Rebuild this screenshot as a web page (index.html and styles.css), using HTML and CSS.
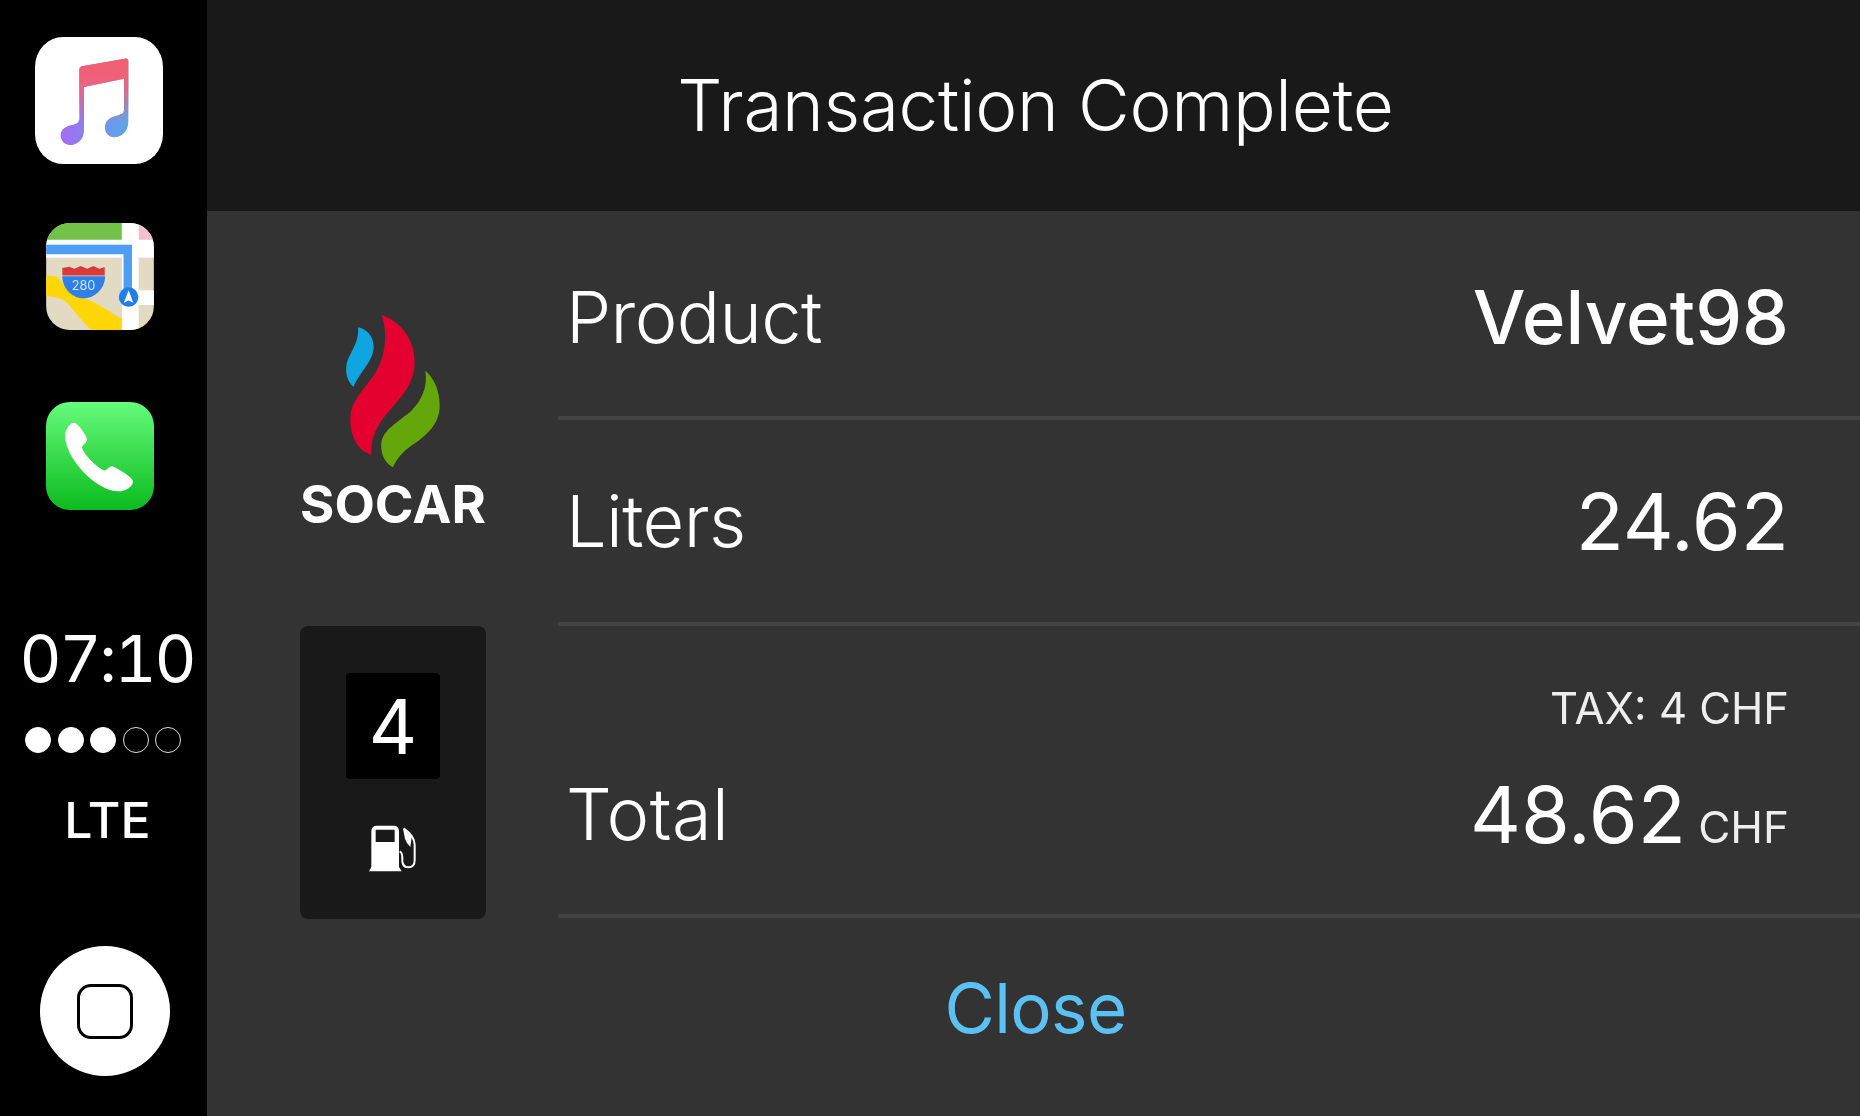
FILE: index.html
```html
<!DOCTYPE html>
<html lang="en">
<head>
<meta charset="utf-8">
<title>Transaction Complete</title>
<link rel="stylesheet" href="styles.css">
</head>
<body>
<div class="screen">
  <aside class="sidebar">
    <svg class="app app-music" viewBox="105 108 384 355" preserveAspectRatio="none">
      <defs>
        <linearGradient id="noteBase" x1="0" x2="1" y1="0" y2="0"><stop offset="0" stop-color="#a46cf2"/><stop offset="1" stop-color="#58a9e8"/></linearGradient>
        <linearGradient id="noteTop" x1="0" x2="0" y1="0" y2="1"><stop offset="0" stop-color="#f25f6e"/><stop offset=".3" stop-color="#ee6280"/><stop offset=".75" stop-color="#ee6280" stop-opacity="0"/></linearGradient>
        <path id="note" d="M238 200Q238 192 246 190L378 168Q385 167 385 175L385 345C385 375 360 390 340 388C322 386 314 372 315 358C316 340 332 332 350 328C362 325 372 322 372 310L372 225L252 248L252 370C252 398 225 412 207 410C190 408 182 395 182 382C183 365 197 358 215 354C228 351 238 348 238 335Z"/>
      </defs>
      <rect x="105" y="108" width="384" height="355" rx="84" fill="#fff"/>
      <use href="#note" fill="url(#noteBase)"/>
      <use href="#note" fill="url(#noteTop)"/>
    </svg>
    <svg class="app app-maps" viewBox="20 22 320 318">
      <rect x="20" y="22" width="320" height="318" fill="#e3dac4"/>
      <rect x="20" y="22" width="225" height="50" fill="#72c24a"/>
      <rect x="295" y="22" width="45" height="50" fill="#f0bfd0"/>
      <rect x="20" y="72" width="320" height="53" fill="#fff"/>
      <path d="M20 178L50 180C62 186 66 200 75 210C95 232 125 243 150 252C185 266 215 292 245 306V340H155C125 315 105 285 85 262C70 246 45 240 20 240Z" fill="#ffd60a"/>
      <rect x="245" y="22" width="50" height="318" fill="#fff"/>
      <rect x="295" y="222" width="45" height="44" fill="#fff"/>
      <path d="M295 340L340 340L340 318C320 318 305 326 295 340Z" fill="#ffd60a"/>
      <path d="M20 87H275V240H250V115H20Z" fill="#4d9df5"/>
      <path d="M68 156L88 152L104 158L122 150L142 158L160 150L178 158L194 153V178H68Z" fill="#d83a3a"/>
      <path d="M68 180H195C195 220 160 246 131 246C102 246 68 220 68 180Z" fill="#2f7fe6"/>
      <text class="shield-num" x="131" y="222">280</text>
      <circle cx="265" cy="242" r="29" fill="#1f7fea"/>
      <path d="M265 222L279 259L265 252L251 259Z" fill="#fff"/>
    </svg>
    <svg class="app app-phone" viewBox="0 0 108 108">
      <defs>
        <linearGradient id="phoneBg" x1="0" x2="0" y1="0" y2="1"><stop offset="0" stop-color="#66fb7c"/><stop offset="1" stop-color="#0bbb1e"/></linearGradient>
      </defs>
      <rect width="108" height="108" rx="24" fill="url(#phoneBg)"/>
      <path transform="translate(0 2) scale(1 1.04)" d="M29 18C33 20 41 31 41 34C41 38 36 39 36 42C38 49 50 60 58 64C61 64 63 59 67 60C72 62 86 70 87 74C88 79 79 84 73 84C50 84 19 52 19 30C19 25 24 17 29 18Z" fill="#fff"/>
    </svg>
    <div class="clock">07:10</div>
    <div class="signal">
      <span class="dot dot-on"></span><span class="dot dot-on"></span><span class="dot dot-on"></span><span class="dot"></span><span class="dot"></span>
    </div>
    <div class="network">LTE</div>
    <div class="home"><span class="home-square"></span></div>
  </aside>
  <main class="main">
    <header class="title-bar">Transaction Complete</header>
    <section class="content">
      <div class="brand-col">
        <svg class="flame" viewBox="190 70 300 462">
          <path d="M235 110C260 115 282 135 282 170C282 210 240 245 222 288C205 275 197 250 200 225C205 190 240 160 235 110Z" fill="#0fa5e0"/>
          <path d="M305 72C345 85 405 130 405 215C405 280 360 325 325 365C295 400 272 440 275 492C235 480 212 440 212 385C212 330 255 295 285 250C315 205 328 130 305 72Z" fill="#e4002f"/>
          <path d="M437 240C465 265 480 300 480 345C480 400 440 435 395 465C370 482 350 505 340 530C312 515 302 485 305 455C312 415 355 395 395 360C425 330 445 290 437 240Z" fill="#64a70b"/>
        </svg>
        <div class="brand-name">SOCAR</div>
        <div class="pump-card">
          <div class="pump-number">4</div>
          <svg class="pump-icon" viewBox="265 640 150 150">
            <path fill-rule="evenodd" d="M278 785L268 785L275 772L275 665Q275 648 292 648L342 648Q358 648 358 665L358 772L366 785ZM290 660Q288 660 288 663L288 697L345 697L345 663Q345 660 342 660Z" fill="#fff"/>
            <path d="M360 725Q368 728 368 745V755Q370 773 386 773Q405 773 405 752L405 705Q405 680 372 656" fill="none" stroke="#fff" stroke-width="6"/>
            <path d="M370 656L396 682L392 712Q380 700 376 688Z" fill="#fff"/>
          </svg>
        </div>
      </div>
      <div class="details">
        <div class="row row-product">
          <span class="label">Product</span><span class="value value-medium">Velvet98</span>
        </div>
        <div class="row row-liters">
          <span class="label">Liters</span><span class="value">24.62</span>
        </div>
        <div class="row row-total">
          <span class="label label-total">Total</span>
          <div class="total-block">
            <div class="tax">TAX: 4 CHF</div>
            <div class="value">48.62 <span class="unit">CHF</span></div>
          </div>
        </div>
        <div class="actions"><span class="close">Close</span></div>
      </div>
    </section>
  </main>
</div>
</body>
</html>
```
FILE: styles.css
```css
* { box-sizing: border-box; }
html, body { margin: 0; padding: 0; background: #000; }
body { font-family: Inter, "Liberation Sans", sans-serif; color: #fff; }
.screen { display: flex; width: 1860px; height: 1116px; overflow: hidden; filter: blur(0.6px); }

.sidebar { width: 207px; flex: none; background: #000; display: flex; flex-direction: column; align-items: flex-start; }
.app { display: block; flex: none; }
.app-music { width: 128px; height: 127px; margin: 37px 0 0 35px; }
.app-maps { width: 108px; height: 107px; margin: 59px 0 0 46px; border-radius: 24px; }
.app-phone { width: 108px; height: 108px; margin: 72px 0 0 46px; }
.shield-num { font-family: Inter, "Liberation Sans", sans-serif; font-size: 38px; fill: #cfe3ff; text-anchor: middle; }
.clock { width: 207px; margin-top: 114px; text-align: center; padding-left: 7px; font-size: 65px; line-height: 70px; letter-spacing: -2.2px; font-variant-numeric: tabular-nums; }
.signal { display: flex; gap: 6.6px; margin: 33px 0 0 25px; }
.dot { width: 26px; height: 26px; border-radius: 50%; border: 1.5px solid #ddd; }
.dot-on { background: #fff; border-color: #fff; }
.network { width: 207px; text-align: center; padding-left: 8px; margin-top: 38px; font-size: 50px; line-height: 58px; font-weight: 500; }
.home { width: 130px; height: 130px; margin: 97px 0 0 40px; border-radius: 50%; background: #fff; display: flex; align-items: center; justify-content: center; }
.home-square { width: 56px; height: 55px; border: 3.5px solid #000; border-radius: 14px; }

.main { flex: 1; display: flex; flex-direction: column; background: #333; }
.title-bar { height: 211px; flex: none; background: #191919; display: flex; align-items: center; justify-content: center; font-size: 71px; font-weight: 300; letter-spacing: -0.3px; padding: 0 0 1px 4px; }
.content { flex: 1; display: flex; }
.brand-col { width: 351px; flex: none; padding: 103px 0 0 93px; display: flex; flex-direction: column; align-items: flex-start; }
.flame { width: 100px; height: 154px; margin-left: 43px; display: block; }
.brand-name { width: 186px; text-align: center; margin-top: 7px; font-size: 52.5px; line-height: 58px; font-weight: 700; }
.pump-card { width: 186px; height: 293px; margin-top: 93px; background: #191919; border-radius: 8px; display: flex; flex-direction: column; align-items: center; padding-top: 47px; }
.pump-number { width: 94px; height: 106px; background: #000; border-radius: 4px; display: flex; align-items: center; justify-content: center; font-size: 75px; font-weight: 400; }
.pump-icon { width: 50px; height: 50px; margin-top: 44px; display: block; }

.details { flex: 1; display: flex; flex-direction: column; }
.row { display: flex; justify-content: space-between; padding: 0 71px 0 8px; border-bottom: 4px solid #434343; }
.row-product { height: 209px; align-items: center; padding-top: 6px; }
.row-liters { height: 206px; align-items: center; }
.row-total { height: 292px; align-items: flex-end; padding-bottom: 57px; }
.label { font-size: 72px; font-weight: 300; line-height: 86px; letter-spacing: -0.6px; }
.label-total { letter-spacing: 0.4px; }
.value { font-size: 79px; font-weight: 400; line-height: 86px; word-spacing: -10px; }
.value-medium { font-size: 74.5px; font-weight: 500; }
.total-block { display: flex; flex-direction: column; align-items: flex-end; }
.tax { font-size: 43.5px; line-height: 54px; margin-bottom: 36px; color: #eee; }
.unit { font-size: 44px; line-height: 1; color: #eee; }
.actions { flex: 1; display: flex; align-items: center; justify-content: center; margin-left: -351px; padding: 0 0 19px 4px; }
.close { font-size: 69px; font-weight: 400; letter-spacing: -0.6px; color: #5ac1f2; }
```
